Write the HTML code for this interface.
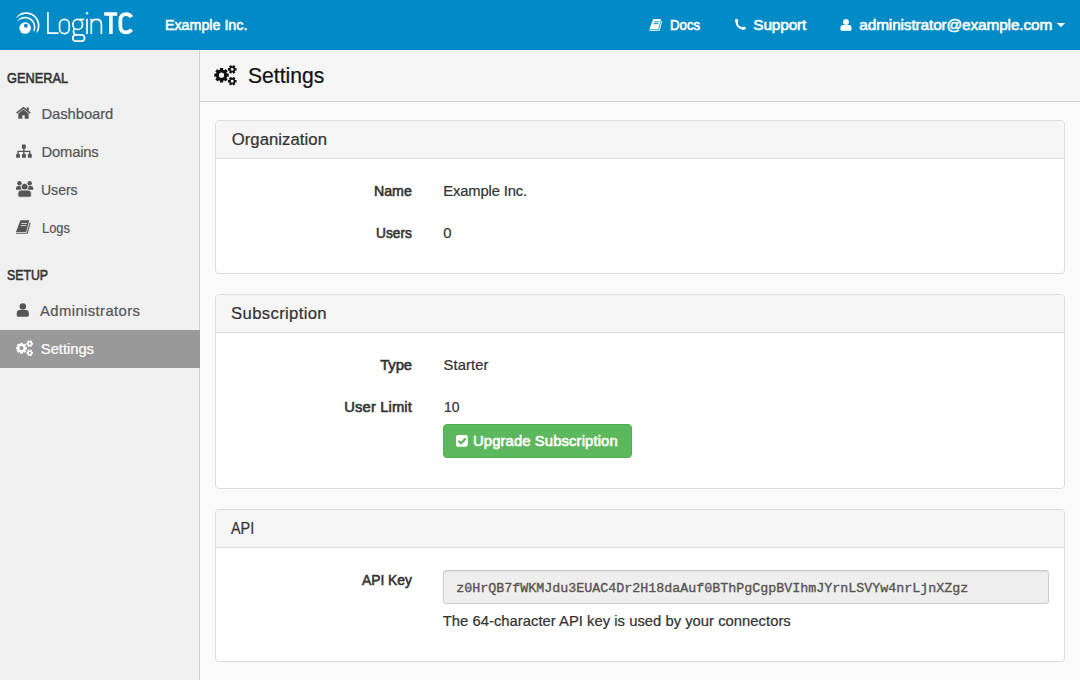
<!DOCTYPE html>
<html><head><meta charset="utf-8"><title>Settings - LoginTC</title><style>
*{margin:0;padding:0;box-sizing:border-box}
html,body{width:1080px;height:680px;overflow:hidden;background:#fafafa;font-family:"Liberation Sans",sans-serif;position:relative}
.t{position:absolute;white-space:nowrap;line-height:1}
.bx{position:absolute}
.mono{font-family:"Liberation Mono",monospace}
.panel{position:absolute;left:215px;width:850px;background:#fff;border:1px solid #ddd;border-radius:4px;overflow:hidden}
.ph{background:#f5f5f5;border-bottom:1px solid #ddd}
</style></head>
<body>
<div class="bx" style="left:0;top:0;width:1080px;height:50px;background:#008ac6"></div><div class="bx" style="left:0;top:50px;width:199px;height:630px;background:#f0f0f0"></div><div class="bx" style="left:199px;top:50px;width:1px;height:630px;background:#cfcfcf"></div><div class="bx" style="left:198px;top:50px;width:1px;height:630px;background:#f4f4f4"></div><div class="bx" style="left:0;top:330px;width:200px;height:38px;background:#999"></div><div class="bx" style="left:200px;top:50px;width:880px;height:51px;background:#f5f5f5"></div><div class="bx" style="left:200px;top:101px;width:880px;height:1px;background:#cdcdcd"></div><div class="panel" style="top:120px;height:154px"><div class="ph" style="height:38px"></div></div><div class="panel" style="top:294px;height:195px"><div class="ph" style="height:38px"></div></div><div class="panel" style="top:509px;height:153px"><div class="ph" style="height:38px"></div></div><div class="bx" style="left:443px;top:424px;width:189px;height:34px;background:#5cb85c;border:1px solid #4cae4c;border-radius:4px"></div><div class="bx" style="left:443px;top:570px;width:606px;height:34px;background:#eee;border:1px solid #ccc;border-radius:3px;box-shadow:inset 0 1px 1px rgba(0,0,0,.075)"></div><svg class="bx" style="left:0;top:0" width="1080" height="680" viewBox="0 0 1080 680"><circle cx="25.1" cy="28.05" r="5.8" fill="#fff"/><circle cx="25.9" cy="25.7" r="1.95" fill="#008ac6"/><path fill="#fff" d="M16.11,17.80 L16.48,17.26 L16.87,16.73 L17.30,16.23 L17.75,15.74 L18.23,15.27 L18.74,14.83 L19.27,14.41 L19.82,14.02 L20.39,13.66 L20.99,13.32 L21.62,13.06 L22.27,12.85 L22.93,12.67 L23.60,12.52 L24.27,12.41 L24.95,12.33 L25.63,12.29 L26.32,12.28 L27.00,12.31 L27.68,12.37 L28.36,12.47 L29.03,12.60 L29.69,12.76 L30.34,12.96 L30.99,13.19 L31.62,13.46 L32.23,13.76 L32.83,14.08 L33.41,14.44 L33.98,14.83 L34.52,15.25 L35.04,15.69 L35.54,16.16 L36.01,16.65 L36.46,17.17 L36.88,17.71 L37.27,18.27 L37.63,18.85 L37.96,19.44 L38.26,20.06 L38.53,20.69 L38.77,21.33 L38.97,21.98 L39.14,22.64 L39.28,23.31 L39.38,23.99 L39.45,24.67 L39.48,25.35 L39.47,26.03 L39.44,26.72 L39.36,27.40 L39.26,28.07 L39.11,28.74 L38.94,29.40 L38.73,30.05 L38.48,30.69 L38.14,31.28 L37.67,31.80 L37.18,32.29 L36.67,32.74 L36.32,32.50 L36.49,31.87 L36.64,31.25 L36.74,30.62 L36.91,30.04 L37.12,29.49 L37.31,28.92 L37.46,28.34 L37.58,27.76 L37.68,27.17 L37.74,26.58 L37.77,25.98 L37.78,25.39 L37.75,24.79 L37.69,24.20 L37.60,23.61 L37.48,23.02 L37.34,22.44 L37.16,21.88 L36.95,21.32 L36.72,20.77 L36.45,20.23 L36.16,19.71 L35.85,19.21 L35.51,18.72 L35.14,18.25 L34.75,17.79 L34.34,17.36 L33.91,16.95 L33.45,16.57 L32.98,16.20 L32.49,15.87 L31.98,15.55 L31.46,15.27 L30.92,15.01 L30.37,14.78 L29.81,14.58 L29.24,14.40 L28.66,14.26 L28.07,14.14 L27.48,14.06 L26.89,14.00 L26.29,13.98 L25.70,13.99 L25.10,14.03 L24.51,14.09 L23.92,14.19 L23.34,14.32 L22.76,14.48 L22.20,14.66 L21.63,14.87 L21.06,15.05 L20.50,15.27 L19.94,15.52 L19.40,15.80 L18.87,16.11 L18.35,16.44 L17.85,16.81 L17.36,17.20 L16.89,17.62 L16.45,18.07Z"/><path fill="#fff" d="M17.52,20.96 L17.79,20.56 L18.08,20.17 L18.38,19.80 L18.71,19.43 L19.06,19.09 L19.43,18.76 L19.81,18.44 L20.21,18.15 L20.63,17.87 L21.07,17.61 L21.52,17.39 L22.00,17.22 L22.48,17.08 L22.98,16.97 L23.47,16.88 L23.97,16.81 L24.48,16.77 L24.98,16.75 L25.49,16.76 L25.99,16.79 L26.49,16.85 L26.99,16.93 L27.49,17.03 L27.97,17.16 L28.46,17.31 L28.93,17.49 L29.39,17.69 L29.85,17.91 L30.29,18.15 L30.72,18.42 L31.14,18.70 L31.54,19.01 L31.93,19.33 L32.30,19.68 L32.65,20.04 L32.99,20.42 L33.30,20.81 L33.60,21.22 L33.88,21.64 L34.13,22.08 L34.37,22.52 L34.58,22.98 L34.77,23.45 L34.94,23.93 L35.08,24.41 L35.20,24.90 L35.29,25.40 L35.36,25.90 L35.41,26.40 L35.43,26.91 L35.42,27.41 L35.40,27.92 L35.34,28.42 L35.27,28.92 L35.16,29.42 L35.04,29.91 L34.80,30.36 L34.47,30.77 L34.13,31.15 L33.77,31.51 L33.41,31.33 L33.46,30.85 L33.47,30.38 L33.46,29.91 L33.50,29.47 L33.61,29.06 L33.69,28.64 L33.76,28.22 L33.80,27.79 L33.83,27.36 L33.83,26.94 L33.81,26.51 L33.77,26.09 L33.71,25.66 L33.63,25.24 L33.53,24.83 L33.41,24.42 L33.27,24.01 L33.11,23.62 L32.93,23.23 L32.73,22.85 L32.52,22.48 L32.28,22.13 L32.03,21.78 L31.77,21.45 L31.48,21.13 L31.18,20.82 L30.87,20.53 L30.54,20.26 L30.20,20.00 L29.85,19.76 L29.49,19.54 L29.11,19.33 L28.73,19.14 L28.34,18.98 L27.94,18.83 L27.53,18.70 L27.12,18.59 L26.70,18.50 L26.28,18.43 L25.85,18.38 L25.43,18.36 L25.00,18.35 L24.57,18.37 L24.15,18.40 L23.72,18.46 L23.30,18.53 L22.89,18.63 L22.48,18.75 L22.07,18.89 L21.66,19.01 L21.24,19.13 L20.83,19.28 L20.43,19.45 L20.03,19.64 L19.64,19.85 L19.25,20.09 L18.88,20.34 L18.52,20.61 L18.17,20.90 L17.83,21.21Z"/><path stroke="#fff" stroke-width="1.7" fill="none" d="M47.9,11.9 V33.15 H58.6"/><rect stroke="#fff" stroke-width="1.7" fill="none" x="59.55" y="19.45" width="9.7" height="14.1" rx="4.85" ry="4.85"/><ellipse stroke="#fff" stroke-width="1.7" fill="none" cx="77.7" cy="24.45" rx="4.85" ry="5.05"/><path stroke="#fff" stroke-width="1.7" fill="none" d="M79.2,19.45 H84.3"/><path stroke="#fff" stroke-width="1.7" fill="none" d="M74.2,28.4 Q73,31 73.8,33.2 Q74.3,34.6 76.5,34.6"/><rect stroke="#fff" stroke-width="1.7" fill="none" x="72.85" y="34.9" width="11.7" height="6.2" rx="3.1" ry="3.1"/><circle cx="87.05" cy="13.2" r="1.2" fill="#fff"/><path stroke="#fff" stroke-width="1.7" fill="none" d="M87,18.8 V34.1"/><path stroke="#fff" stroke-width="1.7" fill="none" d="M91.3,18.8 V34.1 M91.3,24 Q91.8,19.4 96.4,19.4 Q101.4,19.4 101.4,24.5 V34.1"/><path fill="#fff" d="M104.2,12.2 H117.2 V15.8 H112.7 V33.9 H109 V15.8 H104.2Z"/><path fill="none" stroke="#fff" stroke-width="3.8" d="M131.4,17.2 C130.3,15.1 128.5,14.1 126,14.1 C122.6,14.1 120.4,16.2 120.4,19.8 V26.6 C120.4,30.2 122.6,32.4 126,32.4 C128.5,32.4 130.3,31.4 131.4,29.3"/><path fill="none" stroke="#555" stroke-width="1.5" d="M16.6,113.2 L23.5,107.8 L30.3,113.2"/><path fill="#555" d="M18.3,113.6 L23.5,109.6 L28.6,113.6 V118.8 H24.7 V115.2 H22.3 V118.8 H18.3Z"/><path fill="#555" d="M26.7,107.5 H28.8 V111 L26.7,109.4Z"/><rect fill="#555" x="21.9" y="144.4" width="3.9" height="4.4" rx="0.6"/><path fill="none" stroke="#555" stroke-width="1.4" d="M23.85,148.6 V154.2 M18.05,154.2 V151.4 H29.75 V154.2"/><rect fill="#555" x="16.1" y="154" width="3.9" height="3.8" rx="0.6"/><rect fill="#555" x="22.0" y="154" width="3.9" height="3.8" rx="0.6"/><rect fill="#555" x="27.9" y="154" width="3.9" height="3.8" rx="0.6"/><circle fill="#555" cx="19.45" cy="183.2" r="2.2"/><circle fill="#555" cx="29.7" cy="183.2" r="2.2"/><path fill="#555" d="M16,189.8 V188.3 Q16,186.1 18.3,186.1 H19.5 Q21.8,186.1 21.8,188.3 V189.8Z"/><path fill="#555" d="M27.4,189.8 V188.3 Q27.4,186.1 29.7,186.1 H30.9 Q33.2,186.1 33.2,188.3 V189.8Z"/><circle fill="#555" stroke="#f0f0f0" stroke-width="0.9" cx="24.65" cy="186.75" r="3.5"/><path fill="#555" stroke="#f0f0f0" stroke-width="0.9" d="M17.85,195.5 V193.3 Q17.85,190.05 21.1,190.05 H28.1 Q31.35,190.05 31.35,193.3 V195.5 Q31.35,197.25 29.6,197.25 H19.6 Q17.85,197.25 17.85,195.5Z"/><path fill="#555" d="M20.40,220.30 L29.30,220.30 L26.20,231.90 L16.00,231.90Z"/><path fill="none" stroke="#555" stroke-width="1.10" d="M16.10,233.20 L27.30,233.20 L30.10,222.60"/><path fill="none" stroke="#f0f0f0" stroke-width="0.8" d="M21.30,223.50 L26.90,223.50 M20.80,225.60 L26.40,225.60"/><circle fill="#555" cx="22.8" cy="306.5" r="3.25"/><path fill="#555" d="M16.8,313 Q16.8,310 19.8,310 H25.8 Q28.8,310 28.8,313 V315.3 Q28.8,316.8 27.3,316.8 H18.3 Q16.8,316.8 16.8,315.3Z"/><path fill-rule="evenodd" fill="#fff" d="M25.70,346.94 L27.07,346.98 L27.07,349.42 L25.70,349.46 L25.36,350.28 L26.30,351.27 L24.57,353.00 L23.58,352.06 L22.76,352.40 L22.72,353.77 L20.28,353.77 L20.24,352.40 L19.42,352.06 L18.43,353.00 L16.70,351.27 L17.64,350.28 L17.30,349.46 L15.93,349.42 L15.93,346.98 L17.30,346.94 L17.64,346.12 L16.70,345.13 L18.43,343.40 L19.42,344.34 L20.24,344.00 L20.28,342.63 L22.72,342.63 L22.76,344.00 L23.58,344.34 L24.57,343.40 L26.30,345.13 L25.36,346.12Z M23.50,348.20 A2.0020000000000002,2.0020000000000002 0 1 0 19.50,348.20 A2.0020000000000002,2.0020000000000002 0 1 0 23.50,348.20Z M32.02,342.80 L33.06,342.75 L33.06,344.72 L32.02,344.67 L31.69,345.24 L32.25,346.12 L30.55,347.10 L30.07,346.18 L29.41,346.18 L28.93,347.10 L27.23,346.12 L27.79,345.24 L27.46,344.67 L26.42,344.72 L26.42,342.75 L27.46,342.80 L27.79,342.23 L27.23,341.35 L28.93,340.36 L29.41,341.29 L30.07,341.29 L30.55,340.36 L32.25,341.35 L31.69,342.23Z M30.86,343.73 A1.1165,1.1165 0 1 0 28.62,343.73 A1.1165,1.1165 0 1 0 30.86,343.73Z M32.02,351.89 L33.06,351.84 L33.06,353.80 L32.02,353.75 L31.69,354.33 L32.25,355.21 L30.55,356.19 L30.07,355.26 L29.41,355.26 L28.93,356.19 L27.23,355.21 L27.79,354.33 L27.46,353.75 L26.42,353.80 L26.42,351.84 L27.46,351.89 L27.79,351.31 L27.23,350.43 L28.93,349.45 L29.41,350.38 L30.07,350.38 L30.55,349.45 L32.25,350.43 L31.69,351.31Z M30.86,352.82 A1.1165,1.1165 0 1 0 28.62,352.82 A1.1165,1.1165 0 1 0 30.86,352.82Z"/><path fill-rule="evenodd" fill="#111" d="M226.96,73.56 L228.73,73.61 L228.73,76.79 L226.96,76.84 L226.52,77.90 L227.73,79.19 L225.49,81.43 L224.20,80.22 L223.14,80.66 L223.09,82.43 L219.91,82.43 L219.86,80.66 L218.80,80.22 L217.51,81.43 L215.27,79.19 L216.48,77.90 L216.04,76.84 L214.27,76.79 L214.27,73.61 L216.04,73.56 L216.48,72.50 L215.27,71.21 L217.51,68.97 L218.80,70.18 L219.86,69.74 L219.91,67.97 L223.09,67.97 L223.14,69.74 L224.20,70.18 L225.49,68.97 L227.73,71.21 L226.52,72.50Z M224.10,75.20 A2.6,2.6 0 1 0 218.90,75.20 A2.6,2.6 0 1 0 224.10,75.20Z M235.16,68.19 L236.51,68.12 L236.51,70.68 L235.16,70.61 L234.73,71.36 L235.46,72.50 L233.25,73.78 L232.63,72.57 L231.77,72.57 L231.15,73.78 L228.94,72.50 L229.67,71.36 L229.24,70.61 L227.89,70.68 L227.89,68.12 L229.24,68.19 L229.67,67.44 L228.94,66.30 L231.15,65.02 L231.77,66.23 L232.63,66.23 L233.25,65.02 L235.46,66.30 L234.73,67.44Z M233.65,69.40 A1.45,1.45 0 1 0 230.75,69.40 A1.45,1.45 0 1 0 233.65,69.40Z M235.16,79.99 L236.51,79.92 L236.51,82.48 L235.16,82.41 L234.73,83.16 L235.46,84.30 L233.25,85.58 L232.63,84.37 L231.77,84.37 L231.15,85.58 L228.94,84.30 L229.67,83.16 L229.24,82.41 L227.89,82.48 L227.89,79.92 L229.24,79.99 L229.67,79.24 L228.94,78.10 L231.15,76.82 L231.77,78.03 L232.63,78.03 L233.25,76.82 L235.46,78.10 L234.73,79.24Z M233.65,81.20 A1.45,1.45 0 1 0 230.75,81.20 A1.45,1.45 0 1 0 233.65,81.20Z"/><path fill="#fff" d="M653.20,19.00 L661.03,19.00 L658.30,29.21 L649.33,29.21Z"/><path fill="none" stroke="#fff" stroke-width="0.97" d="M649.42,30.35 L659.27,30.35 L661.74,21.02"/><path fill="none" stroke="#008ac6" stroke-width="0.95" d="M653.99,21.82 L658.92,21.82 M653.55,23.66 L658.48,23.66"/><path fill="none" stroke="#fff" stroke-width="2.1" stroke-linecap="round" d="M736.7,21.2 Q736.2,27.6 743.2,28.6"/><ellipse fill="#fff" cx="736.6" cy="20.9" rx="1.6" ry="1.95" transform="rotate(-20 736.6 20.9)"/><ellipse fill="#fff" cx="743.9" cy="28.3" rx="1.95" ry="1.55" transform="rotate(-20 743.9 28.3)"/><circle fill="#fff" cx="846" cy="21.9" r="2.95"/><path fill="#fff" d="M840.5,27.6 Q840.5,25 843.1,25 H848.9 Q851.5,25 851.5,27.6 V29.6 Q851.5,30.8 850.3,30.8 H841.7 Q840.5,30.8 840.5,29.6Z"/><path fill="#fff" d="M1056.8,23.1 H1065.1 L1060.95,27.2Z"/><rect fill="#fff" x="456" y="435" width="11.8" height="11.8" rx="2"/><path fill="none" stroke="#5cb85c" stroke-width="2.2" d="M458.4,440.7 L461,443.2 L465.6,438.6"/></svg><div class="t" style="left:165.30px;top:17.00px;font-size:15.4px;color:#fff;-webkit-text-stroke:0.6px #fff;transform:scaleX(0.9262);transform-origin:-0.30px 0;">Example Inc.</div>
<div class="t" style="left:670.25px;top:17.00px;font-size:15.4px;color:#fff;-webkit-text-stroke:0.6px #fff;transform:scaleX(0.8618);transform-origin:-0.30px 0;">Docs</div>
<div class="t" style="left:753.30px;top:17.00px;font-size:15.4px;color:#fff;-webkit-text-stroke:0.6px #fff;letter-spacing:-0.138px;">Support</div>
<div class="t" style="left:859.30px;top:17.00px;font-size:15.4px;color:#fff;-webkit-text-stroke:0.6px #fff;letter-spacing:-0.130px;">administrator@example.com</div>
<div class="t" style="left:6.70px;top:71.00px;font-size:14.8px;color:#333;-webkit-text-stroke:0.6px #333;transform:scaleX(0.8636);transform-origin:-0.30px 0;">GENERAL</div>
<div class="t" style="left:41.50px;top:107.00px;font-size:14.8px;color:#555;-webkit-text-stroke:0.22px #555;letter-spacing:-0.075px;">Dashboard</div>
<div class="t" style="left:41.50px;top:145.00px;font-size:14.8px;color:#555;-webkit-text-stroke:0.22px #555;letter-spacing:-0.200px;">Domains</div>
<div class="t" style="left:41.30px;top:183.00px;font-size:14.8px;color:#555;-webkit-text-stroke:0.22px #555;transform:scaleX(0.9471);transform-origin:0.00px 0;">Users</div>
<div class="t" style="left:41.50px;top:221.00px;font-size:14.8px;color:#555;-webkit-text-stroke:0.22px #555;transform:scaleX(0.8695);transform-origin:0.00px 0;">Logs</div>
<div class="t" style="left:6.90px;top:268.00px;font-size:14.8px;color:#333;-webkit-text-stroke:0.6px #333;transform:scaleX(0.8329);transform-origin:-0.30px 0;">SETUP</div>
<div class="t" style="left:40.00px;top:304.00px;font-size:14.8px;color:#555;-webkit-text-stroke:0.22px #555;letter-spacing:0.416px;">Administrators</div>
<div class="t" style="left:40.80px;top:342.00px;font-size:14.8px;color:#fff;-webkit-text-stroke:0.22px #fff;letter-spacing:-0.039px;">Settings</div>
<div class="t" style="left:247.80px;top:65.00px;font-size:22px;color:#111;-webkit-text-stroke:0.22px #111;transform:scaleX(0.9587);transform-origin:0.00px 0;">Settings</div>
<div class="t" style="left:231.70px;top:132.00px;font-size:16.7px;color:#333;-webkit-text-stroke:0.22px #333;letter-spacing:0.056px;">Organization</div>
<div class="t" style="left:231.10px;top:306.00px;font-size:16.7px;color:#333;-webkit-text-stroke:0.22px #333;letter-spacing:0.336px;">Subscription</div>
<div class="t" style="left:231.20px;top:521.00px;font-size:16.7px;color:#333;-webkit-text-stroke:0.22px #333;transform:scaleX(0.8618);transform-origin:0.00px 0;">API</div>
<div class="t" style="left:374.30px;top:184.00px;font-size:14.8px;color:#333;-webkit-text-stroke:0.6px #333;transform:scaleX(0.9579);transform-origin:-0.30px 0;">Name</div>
<div class="t" style="left:443.30px;top:184.00px;font-size:14.8px;color:#333;-webkit-text-stroke:0.22px #333;letter-spacing:-0.149px;">Example Inc.</div>
<div class="t" style="left:376.30px;top:226.00px;font-size:14.8px;color:#333;-webkit-text-stroke:0.6px #333;transform:scaleX(0.9276);transform-origin:-0.30px 0;">Users</div>
<div class="t" style="left:443.30px;top:226.00px;font-size:14.8px;color:#333;-webkit-text-stroke:0.22px #333;">0</div>
<div class="t" style="left:380.20px;top:358.00px;font-size:14.8px;color:#333;-webkit-text-stroke:0.6px #333;letter-spacing:-0.062px;">Type</div>
<div class="t" style="left:443.50px;top:358.00px;font-size:14.8px;color:#333;-webkit-text-stroke:0.22px #333;letter-spacing:0.098px;">Starter</div>
<div class="t" style="left:344.30px;top:400.00px;font-size:14.8px;color:#333;-webkit-text-stroke:0.6px #333;letter-spacing:0.109px;">User Limit</div>
<div class="t" style="left:443.50px;top:400.00px;font-size:14.8px;color:#333;-webkit-text-stroke:0.22px #333;transform:scaleX(0.9418);transform-origin:0.00px 0;">10</div>
<div class="t" style="left:473.00px;top:434.00px;font-size:14.8px;color:#fff;-webkit-text-stroke:0.6px #fff;letter-spacing:0.125px;">Upgrade Subscription</div>
<div class="t" style="left:362.20px;top:573.00px;font-size:14.8px;color:#333;-webkit-text-stroke:0.6px #333;transform:scaleX(0.9339);transform-origin:-0.30px 0;">API Key</div>
<div class="t mono" style="left:456.3px;top:582px;font-size:13.33px;color:#555;-webkit-text-stroke:0.35px #555">z0HrQB7fWKMJdu3EUAC4Dr2H18daAuf0BThPgCgpBVIhmJYrnLSVYw4nrLjnXZgz</div><div class="t" style="left:442.80px;top:614.00px;font-size:14.8px;color:#333;-webkit-text-stroke:0.22px #333;letter-spacing:0.017px;">The 64-character API key is used by your connectors</div>

</body></html>
